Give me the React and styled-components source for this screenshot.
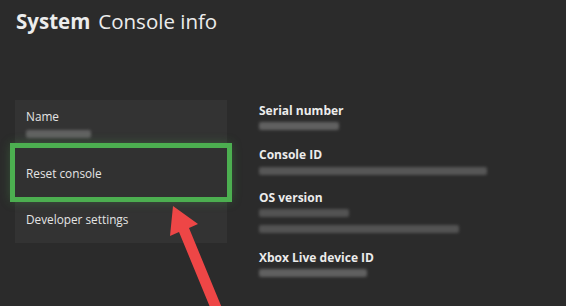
import React from "react"
import styled, { createGlobalStyle } from "styled-components"

const Global = createGlobalStyle`
  html, body {
    margin: 0;
    padding: 0;
    background: #2b2b2b;
  }
  * { box-sizing: border-box; }
`

const Page = styled.div`
  position: relative;
  width: 566px;
  height: 306px;
  overflow: hidden;
  background: #2b2b2b;
  color: #e8e8e8;
  font-family: "Open Sans", "Noto Sans", sans-serif;
`

const Header = styled.h1`
  margin: 0;
  padding: 6px 0 0 16px;
  font-size: 20.5px;
  font-weight: 400;
  line-height: 30px;
  color: #ececec;
  display: flex;
  gap: 8px;
`

const Bold = styled.span`
  font-weight: 700;
`

const Body = styled.div`
  display: flex;
  align-items: flex-start;
  padding: 64px 0 0 15px;
  gap: 32px;
`

const Menu = styled.div`
  width: 212px;
  background: #333333;
  display: flex;
  flex-direction: column;
`

const Item = styled.div`
  height: ${(p) => p.$h}px;
  padding: ${(p) => p.$top}px 11px 0;
  font-size: 11.8px;
  line-height: 16px;
  color: #e4e4e4;
  ${(p) =>
    p.$selected &&
    `
    outline: 5px solid #4caf50;
    box-shadow: 0 0 10px 4px rgba(76, 175, 80, 0.35);
    background: #313131;
    position: relative;
    z-index: 1;
  `}
`

const Blur = styled.div`
  width: ${(p) => p.$w}px;
  height: 8px;
  margin-top: ${(p) => p.$mt || 0}px;
  background: #6e6e6e;
  border-radius: 2px;
  filter: blur(1.5px);
  opacity: ${(p) => p.$o || 0.8};
`

const Info = styled.div`
  display: flex;
  flex-direction: column;
  padding-top: 3px;
`

const Field = styled.div`
  margin-bottom: ${(p) => p.$mb}px;
`

const Label = styled.div`
  font-size: 12px;
  font-weight: 700;
  line-height: 16px;
  color: #ececec;
`

const Overlay = styled.svg`
  position: absolute;
  left: 0;
  top: 0;
  pointer-events: none;
`

export default function App() {
  return (
    <Page>
      <Global />
      <Header>
        <Bold>System</Bold>
        <span>Console info</span>
      </Header>
      <Body>
        <Menu>
          <Item $h={48} $top={8}>
            Name
            <Blur $w={65} $mt={6} />
          </Item>
          <Item $h={49} $top={17} $selected>
            Reset console
          </Item>
          <Item $h={46} $top={14}>
            Developer settings
          </Item>
        </Menu>
        <Info>
          <Field $mb={17}>
            <Label>Serial number</Label>
            <Blur $w={80} $mt={3} />
          </Field>
          <Field $mb={15}>
            <Label>Console ID</Label>
            <Blur $w={228} $mt={4} $o={0.65} />
          </Field>
          <Field $mb={17}>
            <Label>OS version</Label>
            <Blur $w={90} $mt={3} $o={0.6} />
            <Blur $w={200} $mt={8} $o={0.6} />
          </Field>
          <Field $mb={0}>
            <Label>Xbox Live device ID</Label>
            <Blur $w={108} $mt={3} />
          </Field>
        </Info>
      </Body>
      <Overlay width="566" height="306" viewBox="0 0 566 306">
        <polygon
          points="173,206 198,224 189,228 222,308 212,312 179,232 170,236"
          fill="#ee4646"
        />
      </Overlay>
    </Page>
  )
}
